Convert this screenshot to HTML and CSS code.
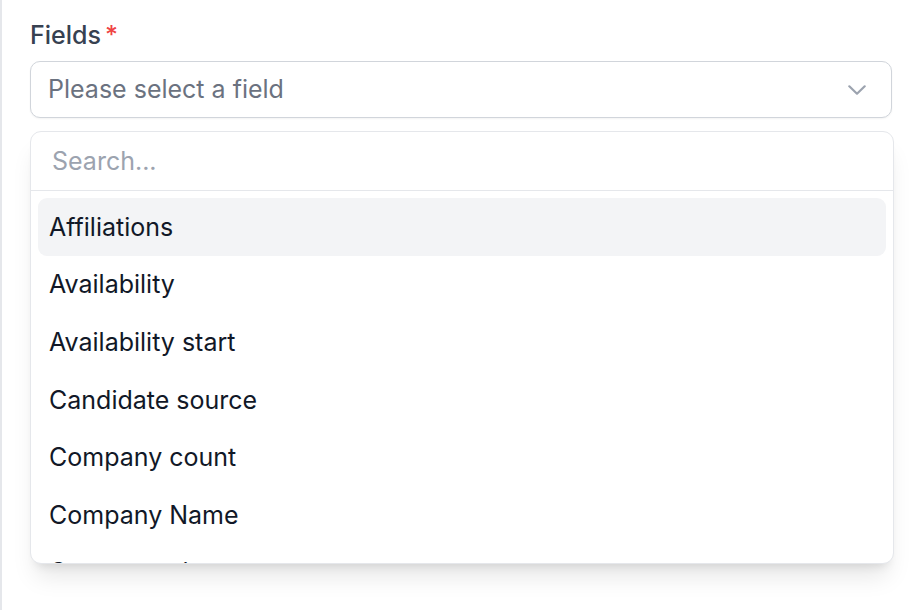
FILE: index.html
```html
<!DOCTYPE html>
<html lang="en">
<head>
<meta charset="utf-8">
<title>Fields</title>
<link rel="stylesheet" href="styles.css">
</head>
<body>
  <div class="page">
    <div class="field">
      <label class="field-label">Fields<span class="required">*</span></label>
      <button class="select" type="button">
        <span class="select-placeholder">Please select a field</span>
        <svg class="chevron" viewBox="0 0 18 10" aria-hidden="true">
          <path d="M1.3 1.3L9 8.7l7.7-7.4" fill="none" stroke="currentColor" stroke-width="2.2" stroke-linecap="round" stroke-linejoin="round"/>
        </svg>
      </button>
      <div class="dropdown">
        <div class="search">
          <input class="search-input" type="text" placeholder="Search...">
        </div>
        <ul class="options">
          <li class="option active">Affiliations</li>
          <li class="option">Availability</li>
          <li class="option">Availability start</li>
          <li class="option">Candidate source</li>
          <li class="option">Company count</li>
          <li class="option">Company Name</li>
          <li class="option">Company size range</li>
        </ul>
      </div>
    </div>
  </div>
</body>
</html>
```

FILE: styles.css
```css
* {
  box-sizing: border-box;
}

html, body {
  margin: 0;
  height: 100%;
  background: #ffffff;
}

body {
  font-family: Inter, "Noto Sans", sans-serif;
  color: #111827;
}

.page {
  height: 100%;
  border-left: 2px solid #e5e7eb;
  padding: 19px 24px 0 28px;
}

.field {
  display: flex;
  flex-direction: column;
}

.field-label {
  font-size: 25px;
  font-weight: 500;
  line-height: 32px;
  color: #374151;
  margin-bottom: 10px;
}

.required {
  color: #ef4444;
  margin-left: 4px;
}

.select {
  display: flex;
  align-items: center;
  justify-content: space-between;
  width: 862px;
  height: 57px;
  padding: 0 25px 0 17px;
  background: #ffffff;
  border: 1px solid #d1d5db;
  border-radius: 10px;
  box-shadow: 0 1px 2px rgba(0, 0, 0, 0.05);
  font: inherit;
  cursor: pointer;
}

.select-placeholder {
  font-size: 25px;
  color: #6b7280;
  margin-top: -1px;
}

.chevron {
  color: #9ca3af;
  width: 18px;
  height: 10px;
}

.dropdown {
  margin-top: 13px;
  width: 864px;
  height: 433px;
  overflow: hidden;
  background: #ffffff;
  border: 1px solid #e5e7eb;
  border-radius: 11px;
  box-shadow: 0 18px 24px -6px rgba(0, 0, 0, 0.1), 0 8px 10px -6px rgba(0, 0, 0, 0.1);
}

.search {
  height: 59px;
  border-bottom: 1px solid #e5e7eb;
  display: flex;
  align-items: center;
  padding: 0 21px;
}

.search-input {
  border: none;
  outline: none;
  width: 100%;
  font: inherit;
  font-size: 25px;
  color: #111827;
  padding: 0;
  background: transparent;
}

.search-input::placeholder {
  color: #9ca3af;
}

.options {
  list-style: none;
  margin: 0;
  padding: 7px 7px;
}

.option {
  height: 57.6px;
  display: flex;
  align-items: center;
  padding: 0 11px;
  border-radius: 9px;
  font-size: 25px;
  color: #111827;
}

.option.active {
  background: #f3f4f6;
}
```
